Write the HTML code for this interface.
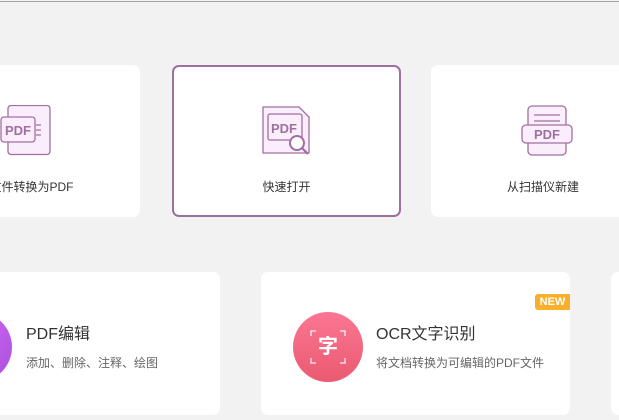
<!DOCTYPE html>
<html><head><meta charset="utf-8"><style>
body{margin:0;width:619px;height:420px;overflow:hidden;background:#f2f2f2;position:relative;font-family:"Liberation Sans","Noto Sans CJK SC",sans-serif}
.top{position:absolute;left:0;top:1px;width:619px;height:1px;background:#a3a3a3}
.c{position:absolute;background:#fff;border-radius:7px;box-sizing:border-box}
.lbl{position:absolute;width:100%;text-align:center;top:113px;font-size:12px;color:#333}
.ic{position:absolute}
.t{position:absolute;font-size:16px;color:#333}
.s{position:absolute;font-size:12px;color:#666}
</style></head><body>
<div class="top"></div>
<div class="c" style="left:-89px;top:65px;width:229px;height:152px">
<svg class="ic" style="left:89px;top:40px" width="52" height="52" viewBox="0 0 52 52" fill="#fbeefc" stroke="#9f6f9f" stroke-width="1.3">
<rect x="8" y="0.5" width="42" height="49" rx="3"/>
<rect x="1" y="12" width="34" height="25" rx="3"/>
<path d="M36 20h5M36 25h5M36 30h5" fill="none"/>
<text x="5" y="30" font-size="13" font-weight="bold" fill="#9f6f9f" stroke="none" font-family="Liberation Sans">PDF</text></svg>
<div class="lbl" style="left:6px">文件转换为PDF</div></div>
<div class="c" style="left:172px;top:65px;width:229px;height:152px;border:2px solid #9d709f">
<svg class="ic" style="left:87px;top:38px" width="52" height="52" viewBox="0 0 52 52" fill="#fbeefc" stroke="#9f6f9f" stroke-width="1.3">
<path d="M2 2h36l10 10v36H2z"/>
<rect x="7" y="9" width="34" height="26" rx="2"/>
<text x="10" y="28" font-size="13" font-weight="bold" fill="#9f6f9f" stroke="none" font-family="Liberation Sans">PDF</text>
<circle cx="36" cy="38" r="7" fill="#fff" stroke-width="2"/><path d="M41 43l6 6" stroke-width="2.2"/></svg>
<div class="lbl" style="top:111px">快速打开</div></div>
<div class="c" style="left:431px;top:65px;width:224px;height:152px">
<svg class="ic" style="left:90px;top:40px" width="52" height="52" viewBox="0 0 52 52" fill="#fbeefc" stroke="#9f6f9f" stroke-width="1.3">
<rect x="7" y="1" width="38" height="49" rx="4"/>
<path d="M13 10h26M13 16h26" fill="none"/>
<rect x="1" y="20" width="50" height="18" rx="4"/>
<text x="13" y="34" font-size="13" font-weight="bold" fill="#9f6f9f" stroke="none" font-family="Liberation Sans">PDF</text></svg>
<div class="lbl">从扫描仪新建</div></div>

<div class="c" style="left:-89px;top:272px;width:309px;height:143px;overflow:hidden">
<div style="position:absolute;left:31px;top:40px;width:70px;height:70px;border-radius:50%;background:linear-gradient(135deg,#d96ef0,#a94fe0)"></div>
<div class="t" style="left:115px;top:48px">PDF编辑</div>
<div class="s" style="left:115px;top:82px">添加、删除、注释、绘图</div></div>
<div class="c" style="left:261px;top:272px;width:309px;height:143px;overflow:hidden">
<div style="position:absolute;left:32px;top:40px;width:70px;height:70px;border-radius:50%;background:linear-gradient(180deg,#fb7693,#ea5a70)"></div>
<svg style="position:absolute;left:32px;top:40px" width="70" height="70" viewBox="0 0 70 70" fill="none" stroke="#fff" stroke-width="1.3" opacity=".9"><path d="M18 24v-5h5M47 19h5v5M52 46v5h-5M23 51h-5v-5"/></svg>
<div style="position:absolute;left:32px;top:58px;width:70px;text-align:center;color:#fff;font-size:20px;font-weight:bold">字</div>
<div class="t" style="left:115px;top:48px">OCR文字识别</div>
<div class="s" style="left:115px;top:82px">将文档转换为可编辑的PDF文件</div>
<div style="position:absolute;right:0;top:22px;width:35px;height:16px;background:#f8b02c;color:#fff;font-size:11px;font-weight:bold;line-height:16px;text-align:center;border-radius:3px 0 0 3px">NEW</div></div>
<div class="c" style="left:611px;top:272px;width:309px;height:143px"></div>
</body></html>
